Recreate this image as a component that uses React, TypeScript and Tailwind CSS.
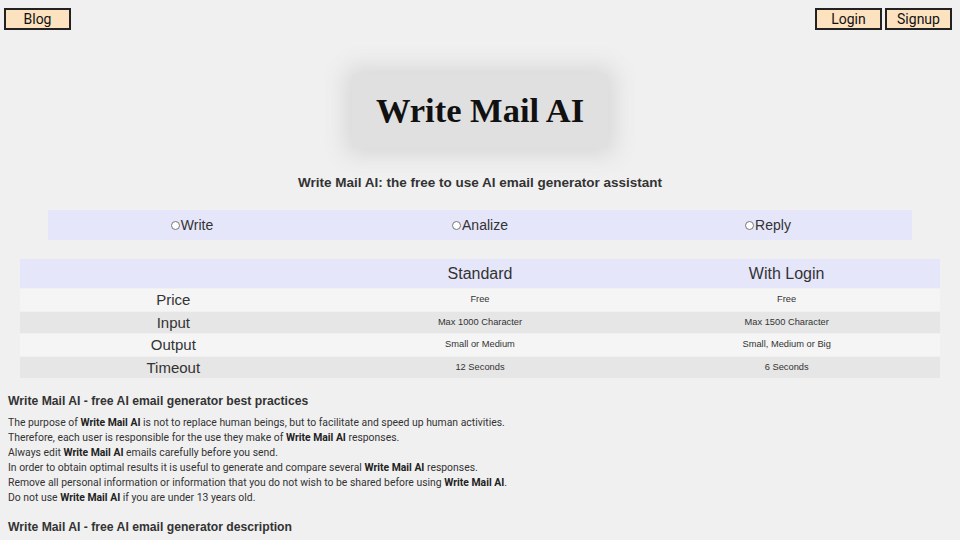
import React from "react";

const rows = [
  { label: "Price", std: "Free", login: "Free" },
  { label: "Input", std: "Max 1000 Character", login: "Max 1500 Character" },
  { label: "Output", std: "Small or Medium", login: "Small, Medium or Big" },
  { label: "Timeout", std: "12 Seconds", login: "6 Seconds" },
];

function NavButton({ children }: { children: React.ReactNode }) {
  return (
    <button className="h-[22px] w-[67px] border-2 border-[#222] bg-[#fde2c0] text-[14px] leading-none text-[#111]">
      {children}
    </button>
  );
}

function B({ children }: { children: React.ReactNode }) {
  return <b className="font-bold text-[#222]">{children}</b>;
}

export default function App() {
  return (
    <div className="min-h-[540px] bg-[#f0f0f0] font-['Roboto','Liberation_Sans',sans-serif] text-[#333]">
      <header className="flex justify-between px-1 pt-2">
        <NavButton>Blog</NavButton>
        <div className="flex gap-[3px] pr-1">
          <NavButton>Login</NavButton>
          <NavButton>Signup</NavButton>
        </div>
      </header>

      <div className="mt-[44px] flex justify-center">
        <div className="flex h-[74px] w-[256px] items-center justify-center bg-[#e0e0e0] shadow-[0_0_22px_6px_#d6d6d6]">
          <span className="font-['Liberation_Serif',serif] text-[34.5px] font-bold text-[#111]">
            Write Mail AI
          </span>
        </div>
      </div>

      <h1 className="mt-[26px] text-center font-['Liberation_Sans',sans-serif] text-[13.5px] font-bold leading-[18px]">
        Write Mail AI: the free to use AI email generator assistant
      </h1>

      <div className="mx-12 mt-[18px] grid h-[30px] grid-cols-3 items-center bg-[#e6e6fa] font-['Liberation_Sans',sans-serif] text-[14px]">
        {["Write", "Analize", "Reply"].map((l) => (
          <label key={l} className="flex items-center justify-center">
            <span className="mr-px inline-block h-[9px] w-[9px] rounded-full border border-[#777] bg-white" />
            {l}
          </label>
        ))}
      </div>

      <div className="mx-5 mt-[19px] flex flex-col gap-px font-['Liberation_Sans',sans-serif]">
        <div className="grid h-[29px] grid-cols-3 items-center bg-[#e6e6fa] text-center text-[16px]">
          <span />
          <span>Standard</span>
          <span>With Login</span>
        </div>
        {rows.map((r, i) => (
          <div
            key={r.label}
            className={`grid h-[21.5px] grid-cols-3 items-center text-center ${
              i % 2 === 0 ? "bg-[#f5f5f5]" : "bg-[#e6e6e6]"
            }`}
          >
            <span className="text-[15px]">{r.label}</span>
            <span className="text-[9.3px]">{r.std}</span>
            <span className="text-[9.3px]">{r.login}</span>
          </div>
        ))}
      </div>

      <section className="px-2 pt-[15px]">
        <h2 className="font-['Liberation_Sans',sans-serif] text-[12.2px] font-bold leading-[16px]">
          Write Mail AI - free AI email generator best practices
        </h2>
        <p className="mt-[6px] text-[10.4px] leading-[15px]">
          The purpose of <B>Write Mail AI</B> is not to replace human beings, but to facilitate and speed up human activities.
          <br />
          Therefore, each user is responsible for the use they make of <B>Write Mail AI</B> responses.
          <br />
          Always edit <B>Write Mail AI</B> emails carefully before you send.
          <br />
          In order to obtain optimal results it is useful to generate and compare several <B>Write Mail AI</B> responses.
          <br />
          Remove all personal information or information that you do not wish to be shared before using <B>Write Mail AI</B>.
          <br />
          Do not use <B>Write Mail AI</B> if you are under 13 years old.
        </p>
        <h2 className="mt-[14px] font-['Liberation_Sans',sans-serif] text-[12.2px] font-bold leading-[16px]">
          Write Mail AI - free AI email generator description
        </h2>
      </section>
    </div>
  );
}
